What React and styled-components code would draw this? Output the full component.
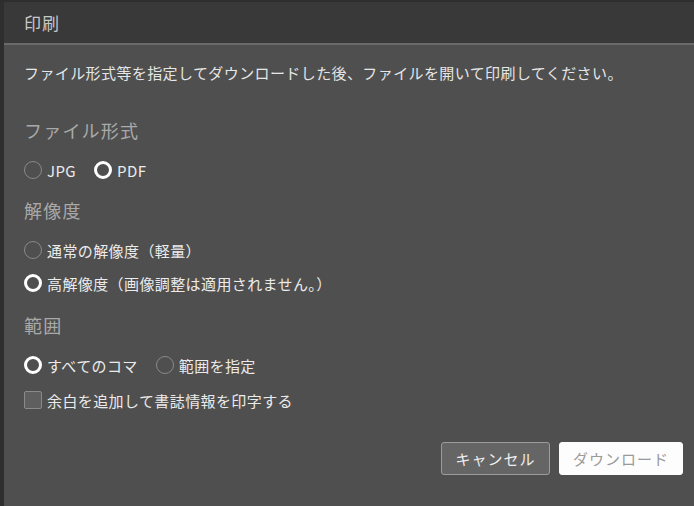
import React, { useState } from 'react';
import styled, { createGlobalStyle } from 'styled-components';

const GlobalStyle = createGlobalStyle`
  html, body {
    margin: 0;
    padding: 0;
    background: #2e2e2e;
    overflow: hidden;
  }
  body {
    font-family: "Noto Sans CJK JP", "Noto Sans", sans-serif;
  }
`;

const Dialog = styled.div`
  margin: 2px 0 0 4px;
  width: 690px;
  height: 504px;
  background: #4f4f4f;
  display: flex;
  flex-direction: column;
`;

const Header = styled.header`
  height: 41px;
  background: #393939;
  border-bottom: 2px solid #6a6a6a;
  display: flex;
  align-items: center;
  padding-left: 20px;
  color: #c8c8c8;
  font-size: 17px;
  letter-spacing: 1px;
`;

const Body = styled.div`
  flex: 1;
  display: flex;
  flex-direction: column;
  padding: 17px 11px 0 20px;
`;

const Description = styled.p`
  margin: 0;
  font-size: 15px;
  line-height: 22px;
  color: #e6e6e6;
  letter-spacing: 0.4px;
  white-space: nowrap;
`;

const Heading = styled.h3`
  margin: ${({ $mt }) => $mt}px 0 0;
  font-size: 18px;
  font-weight: 400;
  line-height: 28px;
  color: #a9a9a9;
  letter-spacing: 1.2px;
`;

const Row = styled.div`
  margin-top: ${({ $mt }) => $mt}px;
  display: flex;
  align-items: center;
  gap: 18px;
  height: 24px;
`;

const Option = styled.label`
  display: flex;
  align-items: center;
  gap: 5px;
  font-size: 15px;
  color: #ebebeb;
  letter-spacing: 0.4px;
  white-space: nowrap;
  cursor: pointer;
`;

const Radio = styled.span`
  box-sizing: border-box;
  width: 18px;
  height: 18px;
  border-radius: 50%;
  background: #4f4f4f;
  border: ${({ $on }) => ($on ? '3.5px solid #ffffff' : '1px solid #8a8a8a')};
`;

const Check = styled.span`
  box-sizing: border-box;
  width: 18px;
  height: 18px;
  border-radius: 2px;
  background: #5f5f5f;
  border: 1px solid #8a8a8a;
`;

const Footer = styled.div`
  margin-top: 30px;
  display: flex;
  justify-content: flex-end;
  gap: 9px;
`;

const Button = styled.button`
  box-sizing: border-box;
  height: 33px;
  padding: 0;
  font-family: inherit;
  font-size: 15px;
  letter-spacing: 1px;
  white-space: nowrap;
  border-radius: 3px;
  cursor: pointer;
  background: ${({ $primary }) => ($primary ? '#fdfdfd' : '#656565')};
  color: ${({ $primary }) => ($primary ? '#9a9a9a' : '#eeeeee')};
  border: 1px solid ${({ $primary }) => ($primary ? '#fdfdfd' : '#9c9c9c')};
  width: ${({ $w }) => $w}px;
`;

const RadioOption = ({ on, label, onClick }) => (
  <Option onClick={onClick}>
    <Radio $on={on} />
    {label}
  </Option>
);

export default function App() {
  const [format, setFormat] = useState('pdf');
  const [res, setRes] = useState('high');
  const [range, setRange] = useState('all');

  return (
    <>
      <GlobalStyle />
      <Dialog>
        <Header>印刷</Header>
        <Body>
          <Description>
            ファイル形式等を指定してダウンロードした後、ファイルを開いて印刷してください。
          </Description>

          <Heading $mt={32}>ファイル形式</Heading>
          <Row $mt={14}>
            <RadioOption on={format === 'jpg'} label="JPG" onClick={() => setFormat('jpg')} />
            <RadioOption on={format === 'pdf'} label="PDF" onClick={() => setFormat('pdf')} />
          </Row>

          <Heading $mt={14}>解像度</Heading>
          <Row $mt={14}>
            <RadioOption on={res === 'normal'} label="通常の解像度（軽量）" onClick={() => setRes('normal')} />
          </Row>
          <Row $mt={9}>
            <RadioOption
              on={res === 'high'}
              label="高解像度（画像調整は適用されません。）"
              onClick={() => setRes('high')}
            />
          </Row>

          <Heading $mt={16}>範囲</Heading>
          <Row $mt={14}>
            <RadioOption on={range === 'all'} label="すべてのコマ" onClick={() => setRange('all')} />
            <RadioOption on={range === 'set'} label="範囲を指定" onClick={() => setRange('set')} />
          </Row>
          <Row $mt={11}>
            <Option>
              <Check />
              余白を追加して書誌情報を印字する
            </Option>
          </Row>

          <Footer>
            <Button $w={109}>キャンセル</Button>
            <Button $primary $w={124}>ダウンロード</Button>
          </Footer>
        </Body>
      </Dialog>
    </>
  );
}
